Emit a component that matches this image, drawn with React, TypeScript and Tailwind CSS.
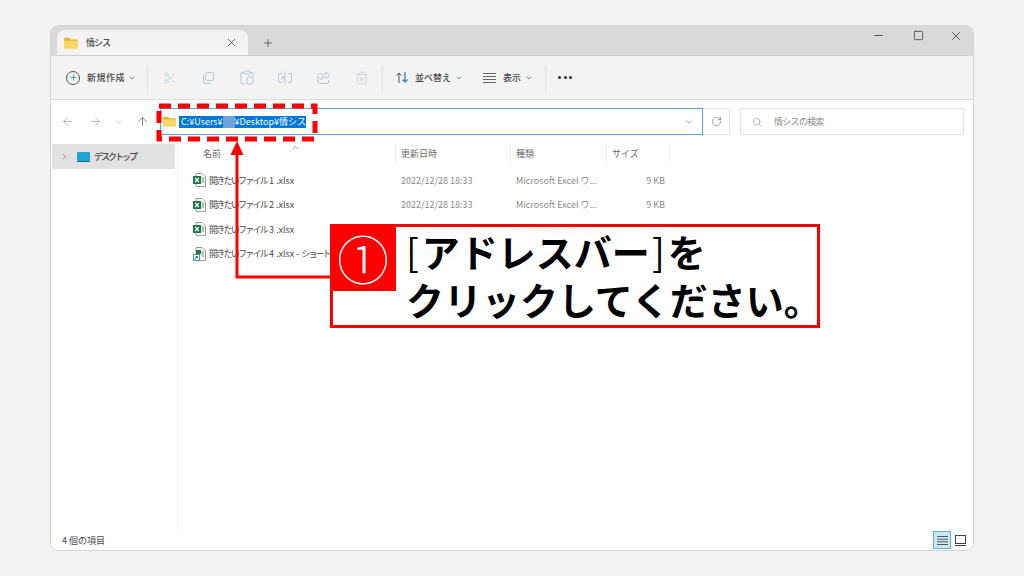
import React from "react";
import {
  ArrowLeft,
  ArrowRight,
  ArrowUp,
  ChevronDown,
  ChevronRight,
  ChevronUp,
  Minus,
  Plus,
  RotateCw,
  Scissors,
  Search,
  Square,
  Trash2,
  X,
} from "lucide-react";

function Folder({ size = 14 }: { size?: number }) {
  return (
    <svg width={size} height={size} viewBox="0 0 16 14" className="shrink-0">
      <path d="M0 2.5 A1.5 1.5 0 0 1 1.5 1 H6 L8 3 H14.5 A1.5 1.5 0 0 1 16 4.5 V6 H0 Z" fill="#f0b429" />
      <path d="M0 4.5 H16 V12 A1.5 1.5 0 0 1 14.5 13.5 H1.5 A1.5 1.5 0 0 1 0 12 Z" fill="#fcd668" />
    </svg>
  );
}

function ExcelIcon({ shortcut }: { shortcut?: boolean }) {
  return (
    <svg width="13" height="14" viewBox="0 0 13 14" className="shrink-0">
      <path d="M3 .5 H9 L12.5 4 V13.5 H3 Z" fill="#fff" stroke="#9a9a9a" />
      <path d="M8.5 5 H11 M8.5 7 H11 M8.5 9 H11" stroke="#4a9a6a" strokeWidth="1" />
      {shortcut ? (
        <>
          <rect x="3" y="3" width="5" height="4" fill="#1f7a45" />
          <rect x="0.5" y="7.5" width="6" height="6" fill="#fff" stroke="#4a8fd0" strokeWidth="1" />
          <path d="M1.5 12.5 L4.5 9.5 M2.5 9.5 H4.5 V11.5" stroke="#2a78c8" strokeWidth="1" fill="none" />
        </>
      ) : (
        <>
          <rect x="0" y="3" width="8" height="8" fill="#1f7a45" />
          <path d="M2.2 5 L5.8 9 M5.8 5 L2.2 9" stroke="#fff" strokeWidth="1.2" />
        </>
      )}
    </svg>
  );
}

const files = [
  { rest: " 1 .xlsx", tail: "", date: "2022/12/28 18:33", kind: "Microsoft Excel ワ...", size: "9 KB" },
  { rest: " 2 .xlsx", tail: "", date: "2022/12/28 18:33", kind: "Microsoft Excel ワ...", size: "9 KB" },
  { rest: " 3 .xlsx", tail: "", date: "2022/12/28 18:33", kind: "Microsoft Excel ワ...", size: "9 KB" },
  { rest: " 4 .xlsx - ", tail: "ショートカット", date: "2023/01/05 16:37", kind: "ショートカット", size: "1 KB", shortcut: true },
];

export default function App() {
  return (
    <div className="relative w-[1024px] h-[576px] overflow-hidden bg-[#f3f3f3] pt-[25px] pl-[50px] font-['Noto_Sans_CJK_JP',sans-serif] text-[#4a4a4a]">
      <div className="w-[924px] h-[526px] flex flex-col rounded-lg overflow-hidden border border-[#d4d4d4]">
        {/* title bar */}
        <div className="h-[30px] bg-[#d9d9d9] flex items-end pl-[6px] border-b border-[#d0d0d0] shrink-0">
          <div className="w-[191px] h-[25px] bg-[#f3f3f3] rounded-t-lg flex items-center pl-[7px] pr-[10px] text-[9px] font-medium">
            <Folder />
            <span className="ml-[8px] flex-1 tracking-[-1px]">情シス</span>
            <X size={13} strokeWidth={1.5} />
          </div>
          <div className="w-[40px] h-[25px] flex items-center justify-center">
            <Plus size={12} strokeWidth={1.5} />
          </div>
          <div className="flex-1 h-full flex items-center justify-end pr-[10px] pb-[10px] text-[#333]">
            <Minus size={13} strokeWidth={1.5} />
            <Square size={11} strokeWidth={1.6} className="ml-[28px]" />
            <X size={14} strokeWidth={1.3} className="ml-[25px]" />
          </div>
        </div>

        {/* command bar */}
        <div className="h-[44px] bg-[#f3f3f3] border-b border-[#dcdcdc] flex items-center pl-[15px] text-[9px] shrink-0">
          <div className="w-[14px] h-[14px] rounded-full border border-[#555] flex items-center justify-center">
            <Plus size={9} strokeWidth={2} className="text-[#2a78c8]" />
          </div>
          <span className="ml-[7px] font-medium tracking-[0.5px]">新規作成</span>
          <ChevronDown size={8} className="ml-[3px]" />
          <div className="w-px h-[26px] bg-[#e2e2e2] ml-[11px]" />
          <div className="flex items-center gap-[24.4px] ml-[15px] text-[#b7c6d4]">
            <Scissors size={14} strokeWidth={1.1} />
            <svg width="14" height="14" viewBox="0 0 14 14" fill="none" stroke="currentColor">
              <rect x="4.5" y="1.5" width="8" height="8" rx="2" />
              <path d="M2.5 4.5 V11 A1.5 1.5 0 0 0 4 12.5 H9.5" />
            </svg>
            <svg width="14" height="15" viewBox="0 0 14 15" fill="none" stroke="currentColor">
              <path d="M4 2.5 H2 A1 1 0 0 0 1 3.5 V13 A1 1 0 0 0 2 14 H6 M10 2.5 H12 A1 1 0 0 1 13 3.5 V6" />
              <rect x="4" y="1" width="6" height="3" rx="1" />
              <rect x="7" y="7" width="6" height="7" rx="1" />
            </svg>
            <svg width="14" height="14" viewBox="0 0 14 14" fill="none" stroke="currentColor">
              <path d="M4 2.5 H2 A1.5 1.5 0 0 0 .5 4 V10 A1.5 1.5 0 0 0 2 11.5 H4 M10 2.5 H12 A1.5 1.5 0 0 1 13.5 4 V10 A1.5 1.5 0 0 1 12 11.5 H10 M7 .5 V13.5 M3.5 9 L5.2 5 L7 9" />
            </svg>
            <svg width="14" height="14" viewBox="0 0 14 14" fill="none" stroke="currentColor">
              <path d="M6 2.5 H2.5 A1.5 1.5 0 0 0 1 4 V11 A1.5 1.5 0 0 0 2.5 12.5 H10 A1.5 1.5 0 0 0 11.5 11 V9" />
              <path d="M9 1 L13 4.5 L9 8 V6 C6.5 6 5 7 4 9 C4 5.5 6 3.2 9 3 Z" />
            </svg>
            <Trash2 size={14} strokeWidth={1.1} />
          </div>
          <div className="w-px h-[26px] bg-[#e2e2e2] ml-[13px]" />
          <svg width="13" height="13" viewBox="0 0 13 13" fill="none" className="ml-[13px]">
            <path d="M3 12 V2 M.5 4.5 L3 2 L5.5 4.5" stroke="#555" />
            <path d="M9 1 V11 M6.5 8.5 L9 11 L11.5 8.5" stroke="#2a88d8" strokeWidth="1.3" />
          </svg>
          <span className="ml-[6px] font-medium">並べ替え</span>
          <ChevronDown size={8} className="ml-[4px]" />
          <svg width="13" height="10" viewBox="0 0 13 10" fill="none" stroke="#666" className="ml-[20px]">
            <path d="M0 .5 H13 M0 3.5 H13 M0 6.5 H13 M0 9.5 H13" />
          </svg>
          <span className="ml-[7px] font-medium">表示</span>
          <ChevronDown size={8} className="ml-[4px]" />
          <div className="w-px h-[26px] bg-[#e2e2e2] ml-[12px]" />
          <div className="flex gap-[2.5px] ml-[12px]">
            <div className="w-[3px] h-[3px] rounded-full bg-[#333]" />
            <div className="w-[3px] h-[3px] rounded-full bg-[#333]" />
            <div className="w-[3px] h-[3px] rounded-full bg-[#333]" />
          </div>
        </div>

        <div className="flex-1 bg-white flex flex-col min-h-0">
          {/* address row */}
          <div className="h-[44px] pt-[8px] flex items-start pl-[10px] pr-[9px] shrink-0">
            <div className="flex items-center h-[27px] text-[#9a9a9a]">
              <ArrowLeft size={13} strokeWidth={1.3} />
              <ArrowRight size={13} strokeWidth={1.3} className="ml-[15px]" />
              <ChevronDown size={10} strokeWidth={1.3} className="ml-[12px]" />
              <ArrowUp size={13} strokeWidth={1.3} className="ml-[12px] text-[#555]" />
            </div>
            <div className="ml-[11px] w-[543px] h-[27px] border border-[#5ca4dc] flex items-center pl-[2px] pr-[8px]">
              <Folder size={13} />
              <div className="ml-[3px] h-[12px] flex items-center bg-[#0078d7] text-white text-[9px] leading-none w-[127px] pl-[2px] whitespace-nowrap">
                <span>C:¥Users¥</span>
                <span className="w-[15px] h-[12px] bg-[#6ea4dc]" />
                <span>¥Desktop¥情シス</span>
              </div>
              <ChevronDown size={10} strokeWidth={1.3} className="ml-auto text-[#666]" />
            </div>
            <div className="w-[27px] h-[27px] border border-l-0 border-[#e6e6e6] flex items-center justify-center">
              <RotateCw size={11} strokeWidth={1.3} className="text-[#666]" />
            </div>
            <div className="ml-[10px] w-[224px] h-[27px] border border-[#e2e2e2] flex items-center pl-[11px] text-[9px] text-[#8a8a8a]">
              <Search size={10} strokeWidth={1.3} />
              <span className="ml-[12px] tracking-[-0.7px]">情シスの検索</span>
            </div>
          </div>

          {/* body */}
          <div className="flex-1 flex min-h-0">
            <div className="w-[127px] border-r border-[#efefef] pl-[1px] pr-[2px] shrink-0">
              <div className="h-[25px] bg-[#e1e1e1] rounded-[2px] flex items-center pl-[8px] text-[9px] font-medium">
                <ChevronRight size={9} className="text-[#777]" />
                <svg width="13" height="10" viewBox="0 0 13 10" className="ml-[8px] shrink-0">
                  <rect width="13" height="9" rx="1" fill="#1ea5d8" />
                  <rect y="9" width="13" height="1" fill="#0d6ea8" />
                </svg>
                <span className="ml-[4px] tracking-[-2px]">デスクトップ</span>
              </div>
            </div>
            <div className="flex-1 text-[9px]">
              <div className="relative h-[20px] grid grid-cols-[218px_115px_96px_63px] text-[#6a6a6a]">
                <div className="pl-[25px] flex items-center border-r border-[#ececec]">名前</div>
                <div className="pl-[5px] flex items-center border-r border-[#ececec]">更新日時</div>
                <div className="pl-[5px] flex items-center border-r border-[#ececec]">種類</div>
                <div className="pl-[5px] flex items-center border-r border-[#ececec]">サイズ</div>
                <ChevronUp size={9} className="absolute left-[113px] -top-[1px] text-[#888]" />
              </div>
              <div className="mt-[4px]">
                {files.map((f) => (
                  <div key={f.rest} className="h-[24.6px] grid grid-cols-[218px_115px_96px_63px] items-center">
                    <div className="pl-[15px] flex items-center overflow-hidden">
                      <ExcelIcon shortcut={f.shortcut} />
                      <span className="ml-[3px] whitespace-pre">
                        <span className="tracking-[-1.75px]">開きたいファイル</span>
                        <span>{f.rest}</span>
                        <span className="tracking-[-2px]">{f.tail}</span>
                      </span>
                    </div>
                    <div className="pl-[5px] text-[#8a8a8a]">{f.date}</div>
                    <div className="pl-[5px] text-[#8a8a8a] whitespace-nowrap">{f.kind}</div>
                    <div className="pr-[5px] text-right text-[#8a8a8a]">{f.size}</div>
                  </div>
                ))}
              </div>
            </div>
          </div>

          {/* status bar */}
          <div className="h-[20px] flex items-end pb-[1px] pl-[11px] pr-[4px] text-[9px] shrink-0">
            <span className="mb-[2px]">4 個の項目</span>
            <div className="ml-auto w-[18px] h-[18px] bg-[#cce8f6] border border-[#5fb2e4] flex items-center justify-center">
              <svg width="11" height="9" viewBox="0 0 11 9" fill="none" stroke="#555">
                <path d="M0 .5 H11 M0 3.2 H11 M0 5.8 H11 M0 8.5 H11" />
              </svg>
            </div>
            <div className="w-[18px] h-[18px] flex items-center justify-center">
              <svg width="11" height="11" viewBox="0 0 11 11" fill="none" stroke="#444">
                <rect x=".5" y=".5" width="10" height="8" />
                <path d="M0 10.5 H11" />
              </svg>
            </div>
          </div>
        </div>
      </div>

      {/* dashed highlight around the address bar */}
      <svg width="162" height="39" viewBox="0 0 162 39" className="absolute left-[156px] top-[103px]">
        <rect x="3" y="3" width="156" height="33" fill="none" stroke="#ff0000" strokeWidth="5" strokeDasharray="12 7" />
      </svg>

      {/* arrow from the callout up to the address bar */}
      <svg width="100" height="140" viewBox="0 0 100 140" className="absolute left-[230px] top-[141px]">
        <path d="M7 10 V136 H100" fill="none" stroke="#ff0000" strokeWidth="3" />
        <path d="M7 0 L0.5 14 H13.5 Z" fill="#ff0000" />
      </svg>

      {/* callout */}
      <div className="absolute left-[330px] top-[224px] w-[490px] h-[104px] border-[3px] border-[#ff0000] bg-white/90 font-bold text-black text-[38px] leading-[48px]">
        <div className="absolute -left-[3px] -top-[3px] w-[66px] h-[67px] bg-[#ff0000] flex items-center justify-center text-white text-[52px] font-light leading-none">
          ①
        </div>
        <div className="pl-[73px] whitespace-nowrap">
          <div>
            <span className="font-normal mr-[3px]">[</span>アドレスバー<span className="font-normal ml-[2px] mr-[3px]">]</span>を
          </div>
          <div>クリックしてください。</div>
        </div>
      </div>
    </div>
  );
}
